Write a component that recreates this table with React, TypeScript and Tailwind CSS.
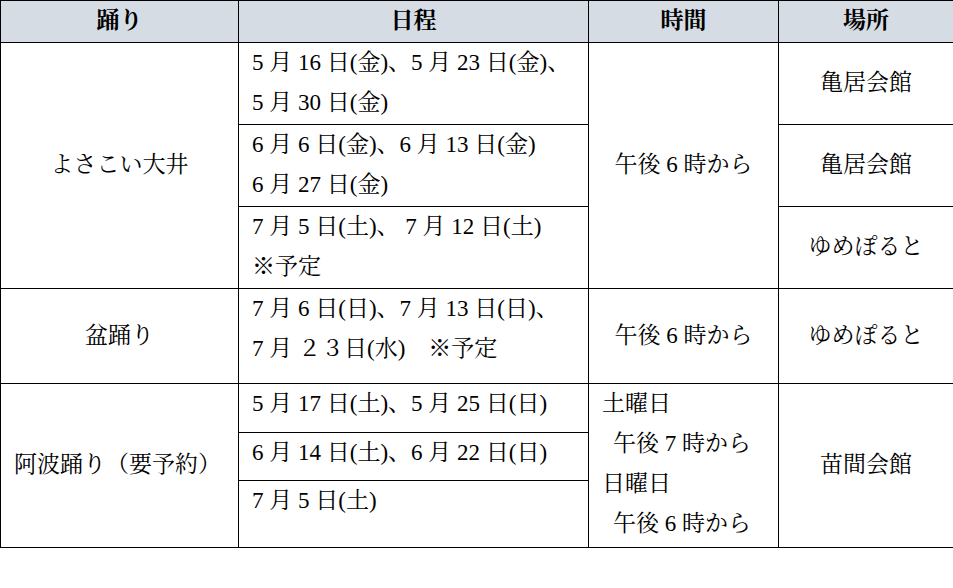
const font = {
  fontFamily: '"Liberation Serif", "Noto Serif CJK JP", "Noto Sans CJK JP", serif',
};

function Lines({ lines }: { lines: string[] }) {
  return (
    <>
      {lines.map((l, i) => (
        <div key={i} className="whitespace-pre">
          {l}
        </div>
      ))}
    </>
  );
}

const cell = 'border border-black p-0';
const sched = `${cell} align-top pl-[13px] leading-[40px]`;
const center = `${cell} text-center align-middle`;

export default function App() {
  return (
    <div className="w-[953px] h-[588px] bg-white text-black" style={font}>
      <table className="table-fixed border-collapse w-[953px] text-[23px]">
        <colgroup>
          <col className="w-[238px]" />
          <col className="w-[350px]" />
          <col className="w-[190px]" />
          <col className="w-[175px]" />
        </colgroup>
        <thead>
          <tr className="h-[42px] bg-[#d6dce4]">
            <th className={`${center} font-bold`}>踊り</th>
            <th className={`${center} font-bold`}>日程</th>
            <th className={`${center} font-bold`}>時間</th>
            <th className={`${center} font-bold`}>場所</th>
          </tr>
        </thead>
        <tbody>
          <tr className="h-[82px]">
            <td rowSpan={3} className={center}>
              よさこい大井
            </td>
            <td className={sched}>
              <Lines lines={['5 月 16 日(金)、5 月 23 日(金)、', '5 月 30 日(金)']} />
            </td>
            <td rowSpan={3} className={center}>
              午後 6 時から
            </td>
            <td className={center}>亀居会館</td>
          </tr>
          <tr className="h-[82px]">
            <td className={sched}>
              <Lines lines={['6 月 6 日(金)、6 月 13 日(金)', '6 月 27 日(金)']} />
            </td>
            <td className={center}>亀居会館</td>
          </tr>
          <tr className="h-[82px]">
            <td className={sched}>
              <Lines lines={['7 月 5 日(土)、 7 月 12 日(土)', '※予定']} />
            </td>
            <td className={center}>ゆめぽると</td>
          </tr>
          <tr className="h-[95px]">
            <td className={center}>盆踊り</td>
            <td className={sched}>
              <Lines lines={['7 月 6 日(日)、7 月 13 日(日)、', '7 月 ２３日(水)　※予定']} />
            </td>
            <td className={center}>午後 6 時から</td>
            <td className={center}>ゆめぽると</td>
          </tr>
          <tr className="h-[49px]">
            <td rowSpan={3} className={`${cell} align-middle pl-[13px]`}>
              阿波踊り（要予約）
            </td>
            <td className={sched}>5 月 17 日(土)、5 月 25 日(日)</td>
            <td rowSpan={3} className={`${cell} align-top pl-[13px] leading-[40px]`}>
              <div>土曜日</div>
              <div className="pl-[11px]">午後 7 時から</div>
              <div>日曜日</div>
              <div className="pl-[11px]">午後 6 時から</div>
            </td>
            <td rowSpan={3} className={center}>
              苗間会館
            </td>
          </tr>
          <tr className="h-[48px]">
            <td className={sched}>6 月 14 日(土)、6 月 22 日(日)</td>
          </tr>
          <tr className="h-[67px]">
            <td className={sched}>7 月 5 日(土)</td>
          </tr>
        </tbody>
      </table>
    </div>
  );
}
